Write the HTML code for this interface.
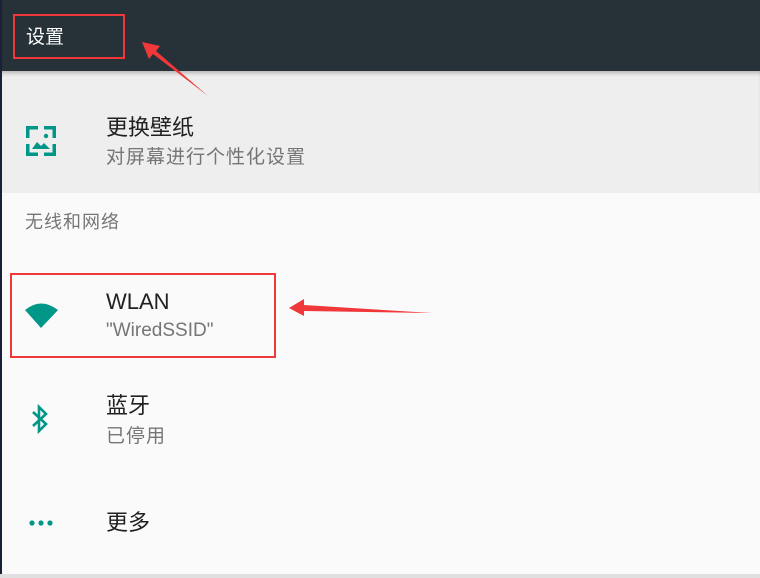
<!DOCTYPE html>
<html><head><meta charset="utf-8"><style>
body{margin:0;width:760px;height:578px;overflow:hidden;background:#fafafa;font-family:"Liberation Sans","Noto Sans CJK SC",sans-serif;position:relative}
.abs{position:absolute}
.t{font-size:22px;color:#212121;line-height:1}
.s{font-size:19px;color:#757575;line-height:1}
.cj{letter-spacing:1px}
</style></head><body>
<div class="abs" style="left:0;top:0;width:760px;height:71px;background:#263238"></div>
<div class="abs" style="left:0;top:71px;width:760px;height:122px;background:#eeeeee;box-shadow:inset 0 4px 4px -2px rgba(0,0,0,.25)"></div>
<div class="abs" style="left:0;top:0;width:2px;height:578px;background:#1a1f3a"></div>
<div class="abs" style="left:0;top:574px;width:760px;height:4px;background:#e0e0e0"></div>
<div class="abs" style="left:26px;top:28px;font-size:19px;color:#fff;line-height:1">设置</div>
<div class="abs" style="left:13px;top:14px;width:108px;height:41px;border:2px solid #f0373a"></div>
<div class="abs t" style="left:106px;top:117px">更换壁纸</div>
<div class="abs s cj" style="left:106px;top:148px">对屏幕进行个性化设置</div>
<svg class="abs" style="left:26px;top:126px" width="30" height="30" viewBox="0 0 30 30" fill="#009688"><path d="M0 0h12v3.5H3.5v8.5H0zM18 0h12v12h-3.5V3.5H18zM0 18h3.5v8.5H12V30H0zM26.5 18H30v12H18v-3.5h8.5z"/><circle cx="20" cy="10" r="2.2"/><path d="M6 23l5-7 4 4 3-3 6 6z"/></svg>
<div class="abs s cj" style="left:25px;top:213px;font-size:18px">无线和网络</div>
<div class="abs t" style="left:106px;top:291px">WLAN</div>
<div class="abs s" style="left:106px;top:321px">"WiredSSID"</div>
<svg class="abs" style="left:24px;top:300px" width="36" height="30" viewBox="0 0 36 30"><path d="M1 10Q17-3 34 10L17 28z" fill="#009688"/></svg>
<div class="abs" style="left:10px;top:273px;width:262px;height:81px;border:2px solid #f0373a"></div>
<div class="abs t" style="left:106px;top:395px">蓝牙</div>
<div class="abs s cj" style="left:106px;top:427px">已停用</div>
<svg class="abs" style="left:29px;top:404px" width="22" height="30" viewBox="0 0 22 30"><path d="M4 8l13 12-7 7V3l7 7L4 22" fill="none" stroke="#009688" stroke-width="2.6"/></svg>
<svg class="abs" style="left:28px;top:518px" width="28" height="10"><circle cx="4" cy="5" r="2.6" fill="#009688"/><circle cx="13" cy="5" r="2.6" fill="#009688"/><circle cx="22" cy="5" r="2.6" fill="#009688"/></svg>
<div class="abs t" style="left:106px;top:512px">更多</div>
<svg class="abs" style="left:0;top:0" width="760" height="578"><path d="M142 42L160 46 156 51 208 96 153 54 149 59z" fill="#f0373a"/><path d="M289 308L304 299 304 305 432 313 304 311 304 316z" fill="#f0373a"/></svg>
</body></html>
